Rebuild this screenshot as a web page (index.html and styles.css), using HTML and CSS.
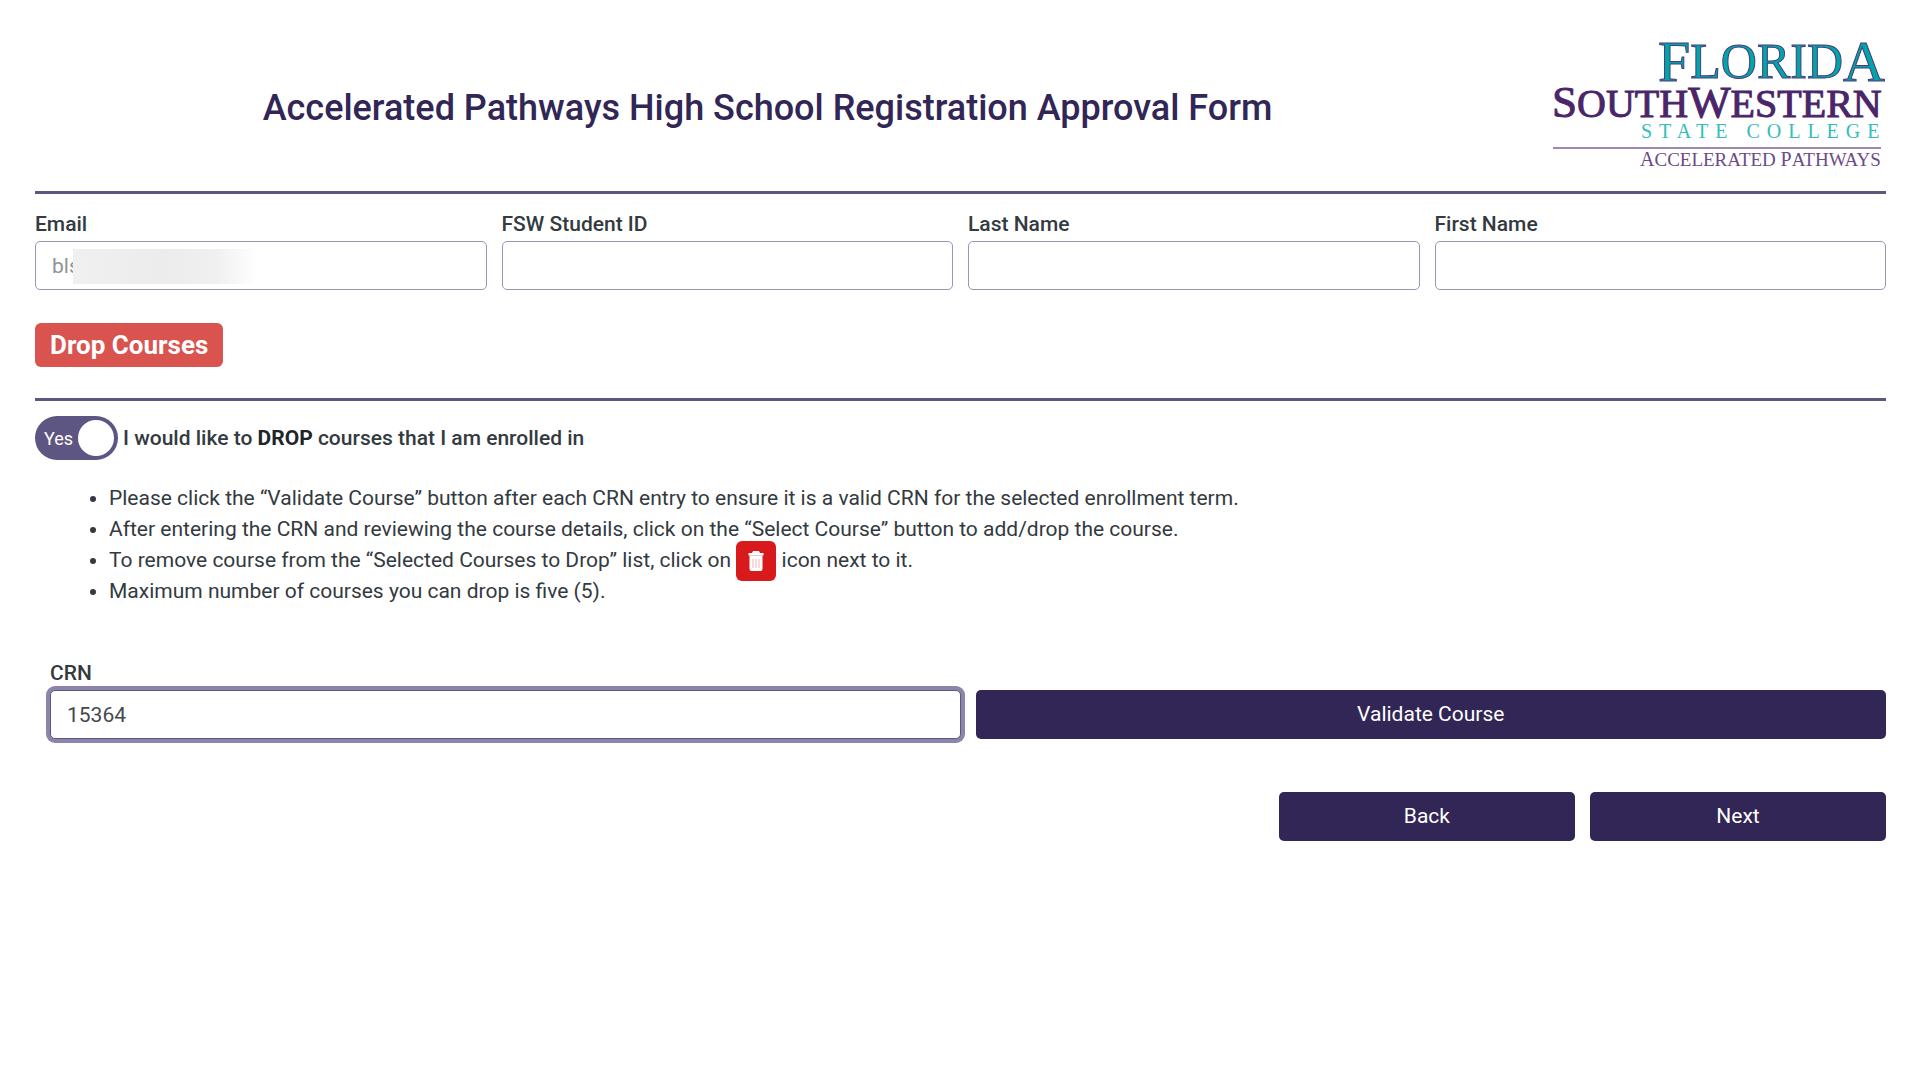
FILE: index.html
```html
<!DOCTYPE html>
<html lang="en">
<head>
    <meta charset="UTF-8">
    <meta name="viewport" content="width=device-width, initial-scale=1.0">
    <title>Accelerated Pathways High School Registration Approval Form</title>
    <link rel="stylesheet" href="styles.css">
</head>
<body>
    <form class="page">
        <header class="header">
            <h1>Accelerated Pathways High School Registration Approval Form</h1>
            <svg class="logo" viewBox="0 -18 334 150" role="img" aria-label="Florida SouthWestern State College, Accelerated Pathways">
                <text class="logo-florida" x="106" y="43" font-size="58">F<tspan font-size="50" dy="-3">LORID</tspan><tspan dy="3">A</tspan></text>
                <text class="logo-southwestern" x="0" y="79" font-size="40"><tspan font-size="45">S</tspan>OUTH<tspan font-size="45">W</tspan>ESTERN</text>
                <text class="logo-state" x="89" y="100" font-size="20">STATE COLLEGE</text>
                <rect x="1" y="109" width="328" height="2" fill="#9c88b2"/>
                <text class="logo-pathways" x="88" y="128" font-size="19"><tspan font-size="20">A</tspan>CCELERATED <tspan font-size="20">P</tspan>ATHWAYS</text>
            </svg>
        </header>

        <section class="student">
            <div class="field">
                <label for="email">Email</label>
                <div class="masked">
                    <input type="text" id="email" class="email" value="bls" readonly>
                    <span class="mask"></span>
                </div>
            </div>
            <div class="field">
                <label for="student-id">FSW Student ID</label>
                <input type="text" id="student-id">
            </div>
            <div class="field">
                <label for="last-name">Last Name</label>
                <input type="text" id="last-name">
            </div>
            <div class="field">
                <label for="first-name">First Name</label>
                <input type="text" id="first-name">
            </div>
        </section>

        <div class="section-title">
            <h2 class="badge">Drop Courses</h2>
        </div>

        <label class="switch-row">
            <input type="checkbox" class="switch-input" checked>
            <span class="switch"><span>Yes</span><span class="knob"></span></span>
            <span>I would like to <strong>DROP</strong> courses that I am enrolled in</span>
        </label>

        <ul class="notes">
            <li>Please click the “Validate Course” button after each CRN entry to ensure it is a valid CRN for the selected enrollment term.</li>
            <li>After entering the CRN and reviewing the course details, click on the “Select Course” button to add/drop the course.</li>
            <li>To remove course from the “Selected Courses to Drop” list, click on
                <span class="trash"><svg viewBox="0 0 16 20" width="16" height="20">
                    <path d="M5 0h6l1 2h3.500v2.500H.5V2H4z" fill="#fff"/>
                    <path d="M1.500 4.500h13V18a2 2 0 0 1-2 2h-9a2 2 0 0 1-2-2z" fill="#fff"/>
                    <path d="M5 8v9M8 8v9M11 8v9" stroke="#f8ccd6" stroke-width="1.500"/>
                </svg></span>
                icon next to it.</li>
            <li>Maximum number of courses you can drop is five (5).</li>
        </ul>

        <section class="course">
            <div class="field">
                <label for="crn">CRN</label>
                <input type="text" id="crn" class="crn" value="15364">
            </div>
            <button type="button" class="btn">Validate Course</button>
        </section>

        <footer class="actions">
            <button type="button" class="btn">Back</button>
            <button type="button" class="btn">Next</button>
        </footer>
    </form>
</body>
</html>
```
FILE: styles.css
```css
* {
    box-sizing: border-box;
}
body {
    margin: 0;
    background-color: #fff;
    color: #333a40;
    font-family: Roboto, sans-serif;
    font-size: 21px;
    line-height: 31px;
}
.page {
    padding: 20px 34px 40px 35px;
}
.header {
    display: flex;
    align-items: center;
    gap: 52px;
    padding-bottom: 21px;
    border-bottom: 3px solid #5d5582;
}
.header h1 {
    flex: 1;
    margin: 0;
    padding-top: 26px;
    color: #312656;
    font-size: 36px;
    line-height: 44px;
    font-weight: 500;
    text-align: center;
}
.logo {
    width: 334px;
    height: 150px;
    overflow: visible;
    font-family: "Liberation Serif", serif;
}
.logo-florida {
    fill: #00a5a8;
    stroke: #4a3a7c;
    stroke-width: 1;
}
.logo-southwestern {
    fill: #4b2569;
    stroke: #4b2569;
    stroke-width: 1;
}
.logo-state {
    fill: #35bdba;
    letter-spacing: 7px;
}
.logo-pathways {
    fill: #6d4b87;
}

/* Form fields */
.field label {
    display: block;
    margin-bottom: 1px;
    font-weight: 500;
}
input[type="text"] {
    display: block;
    width: 100%;
    height: 49px;
    padding: 0 16px;
    border: 1px solid #9a95b5;
    border-radius: 5px;
    background: #fff;
    color: #43484d;
    font: inherit;
}
.student {
    display: grid;
    grid-template-columns: repeat(4, 1fr);
    gap: 15px;
    padding-top: 15px;
}
.masked {
    position: relative;
}
input.email {
    color: #929292;
}
.mask {
    position: absolute;
    left: 38px;
    top: 8px;
    width: 184px;
    height: 35px;
    background: linear-gradient(to right, #f0f0f0, #ececec 50%, #f0f0f0 78%, #fff);
}

.section-title {
    padding: 33px 0 31px;
    border-bottom: 3px solid #5d5582;
}
.badge {
    width: fit-content;
    margin: 0;
    padding: 0 15px;
    border-radius: 6px;
    background: #d9534f;
    color: #fff;
    font-size: 26px;
    line-height: 44px;
    font-weight: 700;
}

/* Yes / No switch */
.switch-row {
    display: flex;
    align-items: center;
    gap: 5px;
    width: fit-content;
    margin-top: 15px;
    font-weight: 500;
}
.switch-row strong {
    color: #212529;
    font-weight: 700;
}
.switch-input {
    position: absolute;
    opacity: 0;
}
.switch {
    display: flex;
    align-items: center;
    justify-content: space-between;
    width: 83px;
    height: 44px;
    padding: 0 4px 0 9px;
    border-radius: 22px;
    background: #5d5582;
    color: #fff;
    font-size: 18px;
    font-weight: 400;
}
.knob {
    width: 36px;
    height: 36px;
    border-radius: 50%;
    background: #fff;
}

.notes {
    margin: 23px 0 0;
    padding-left: 74px;
}
.trash {
    display: inline-flex;
    align-items: center;
    justify-content: center;
    width: 40px;
    height: 40px;
    margin: -8px 0;
    border-radius: 6px;
    background: #d91a1c;
    vertical-align: middle;
}

.course {
    display: grid;
    grid-template-columns: 1fr 1fr;
    align-items: end;
    gap: 15px;
    margin-top: 51px;
    padding-left: 15px;
}
input.crn {
    border-color: #5d5582;
    box-shadow: 0 0 0 4px #8d84a9;
    outline: none;
}
.btn {
    height: 49px;
    padding: 0 16px;
    border: 0;
    border-radius: 5px;
    background: #312656;
    color: #fff;
    font: inherit;
}
.actions {
    display: grid;
    grid-template-columns: 1fr 1fr;
    gap: 15px;
    width: 32.8%;
    margin: 53px 0 0 auto;
}
```
